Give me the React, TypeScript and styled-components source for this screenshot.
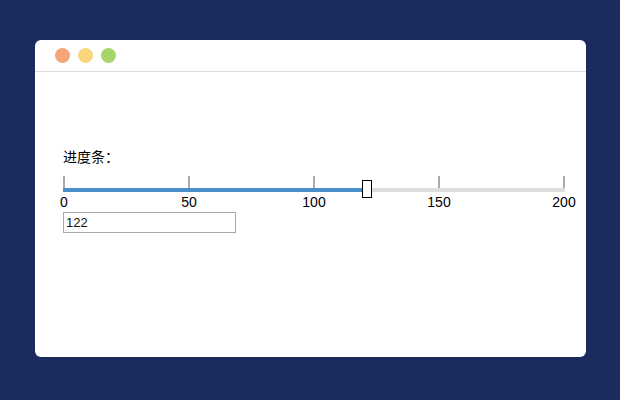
import styled, { createGlobalStyle } from 'styled-components';

const GlobalStyle = createGlobalStyle`
  html, body {
    margin: 0;
    padding: 0;
    background-color: #1b2b5e;
  }
  body {
    font-family: "Liberation Sans", "Noto Sans CJK SC", sans-serif;
  }
`;

const Page = styled.div`
  width: 620px;
  height: 400px;
  padding: 40px 0 0 35px;
  box-sizing: border-box;
`;

const Window = styled.div`
  width: 551px;
  height: 317px;
  background-color: #ffffff;
  border-radius: 6px;
  overflow: hidden;
`;

const TitleBar = styled.div`
  display: flex;
  align-items: center;
  gap: 8px;
  height: 31px;
  padding-left: 20px;
  border-bottom: 1px solid #dcdcdc;
`;

const Dot = styled.span<{ $color: string }>`
  width: 15px;
  height: 15px;
  border-radius: 50%;
  background-color: ${(p) => p.$color};
`;

const Content = styled.div`
  padding: 74px 0 0 28px;
`;

const Label = styled.div`
  font-family: "Noto Sans CJK SC", sans-serif;
  font-size: 14px;
  line-height: 20px;
  color: #000;
`;

const Slider = styled.div`
  position: relative;
  width: 502px;
  margin-top: 10px;
`;

const Ticks = styled.div`
  display: flex;
  justify-content: space-between;
  height: 12px;
`;

const Tick = styled.span`
  width: 2px;
  height: 12px;
  background-color: #aaaaaa;
`;

const Track = styled.div`
  height: 4px;
  background-color: #dddddd;
`;

const Fill = styled.div`
  height: 4px;
  background-color: #4a8fcc;
`;

const Thumb = styled.div`
  position: absolute;
  top: 4px;
  width: 10px;
  height: 18px;
  box-sizing: border-box;
  border: 1px solid #000;
  background-color: #fff;
`;

const TickLabels = styled.div`
  display: flex;
  justify-content: space-between;
  width: 530px;
  margin: 2px 0 0 -14px;
`;

const TickLabel = styled.span`
  width: 30px;
  text-align: center;
  font-family: "Liberation Sans", sans-serif;
  font-size: 14px;
  line-height: 16px;
  color: #000;
`;

const ValueInput = styled.input`
  display: block;
  width: 173px;
  height: 21px;
  margin-top: 2px;
  padding: 0 2px;
  box-sizing: border-box;
  border: 1px solid #a9a9a9;
  font-family: "Liberation Sans", sans-serif;
  font-size: 13px;
  color: #111;
  outline: none;
`;

const marks = [0, 50, 100, 150, 200];
const value = 122;
const max = 200;

export default function App() {
  const pos = (value / max) * 500;
  return (
    <>
      <GlobalStyle />
      <Page>
        <Window>
          <TitleBar>
            <Dot $color="#f5a578" />
            <Dot $color="#f9d67c" />
            <Dot $color="#a6d669" />
          </TitleBar>
          <Content>
            <Label>进度条：</Label>
            <Slider>
              <Ticks>
                {marks.map((m) => (
                  <Tick key={m} />
                ))}
              </Ticks>
              <Track>
                <Fill style={{ width: pos - 6 }} />
              </Track>
              <Thumb style={{ left: pos - 6 }} />
              <TickLabels>
                {marks.map((m) => (
                  <TickLabel key={m}>{m}</TickLabel>
                ))}
              </TickLabels>
            </Slider>
            <ValueInput defaultValue={String(value)} />
          </Content>
        </Window>
      </Page>
    </>
  );
}
